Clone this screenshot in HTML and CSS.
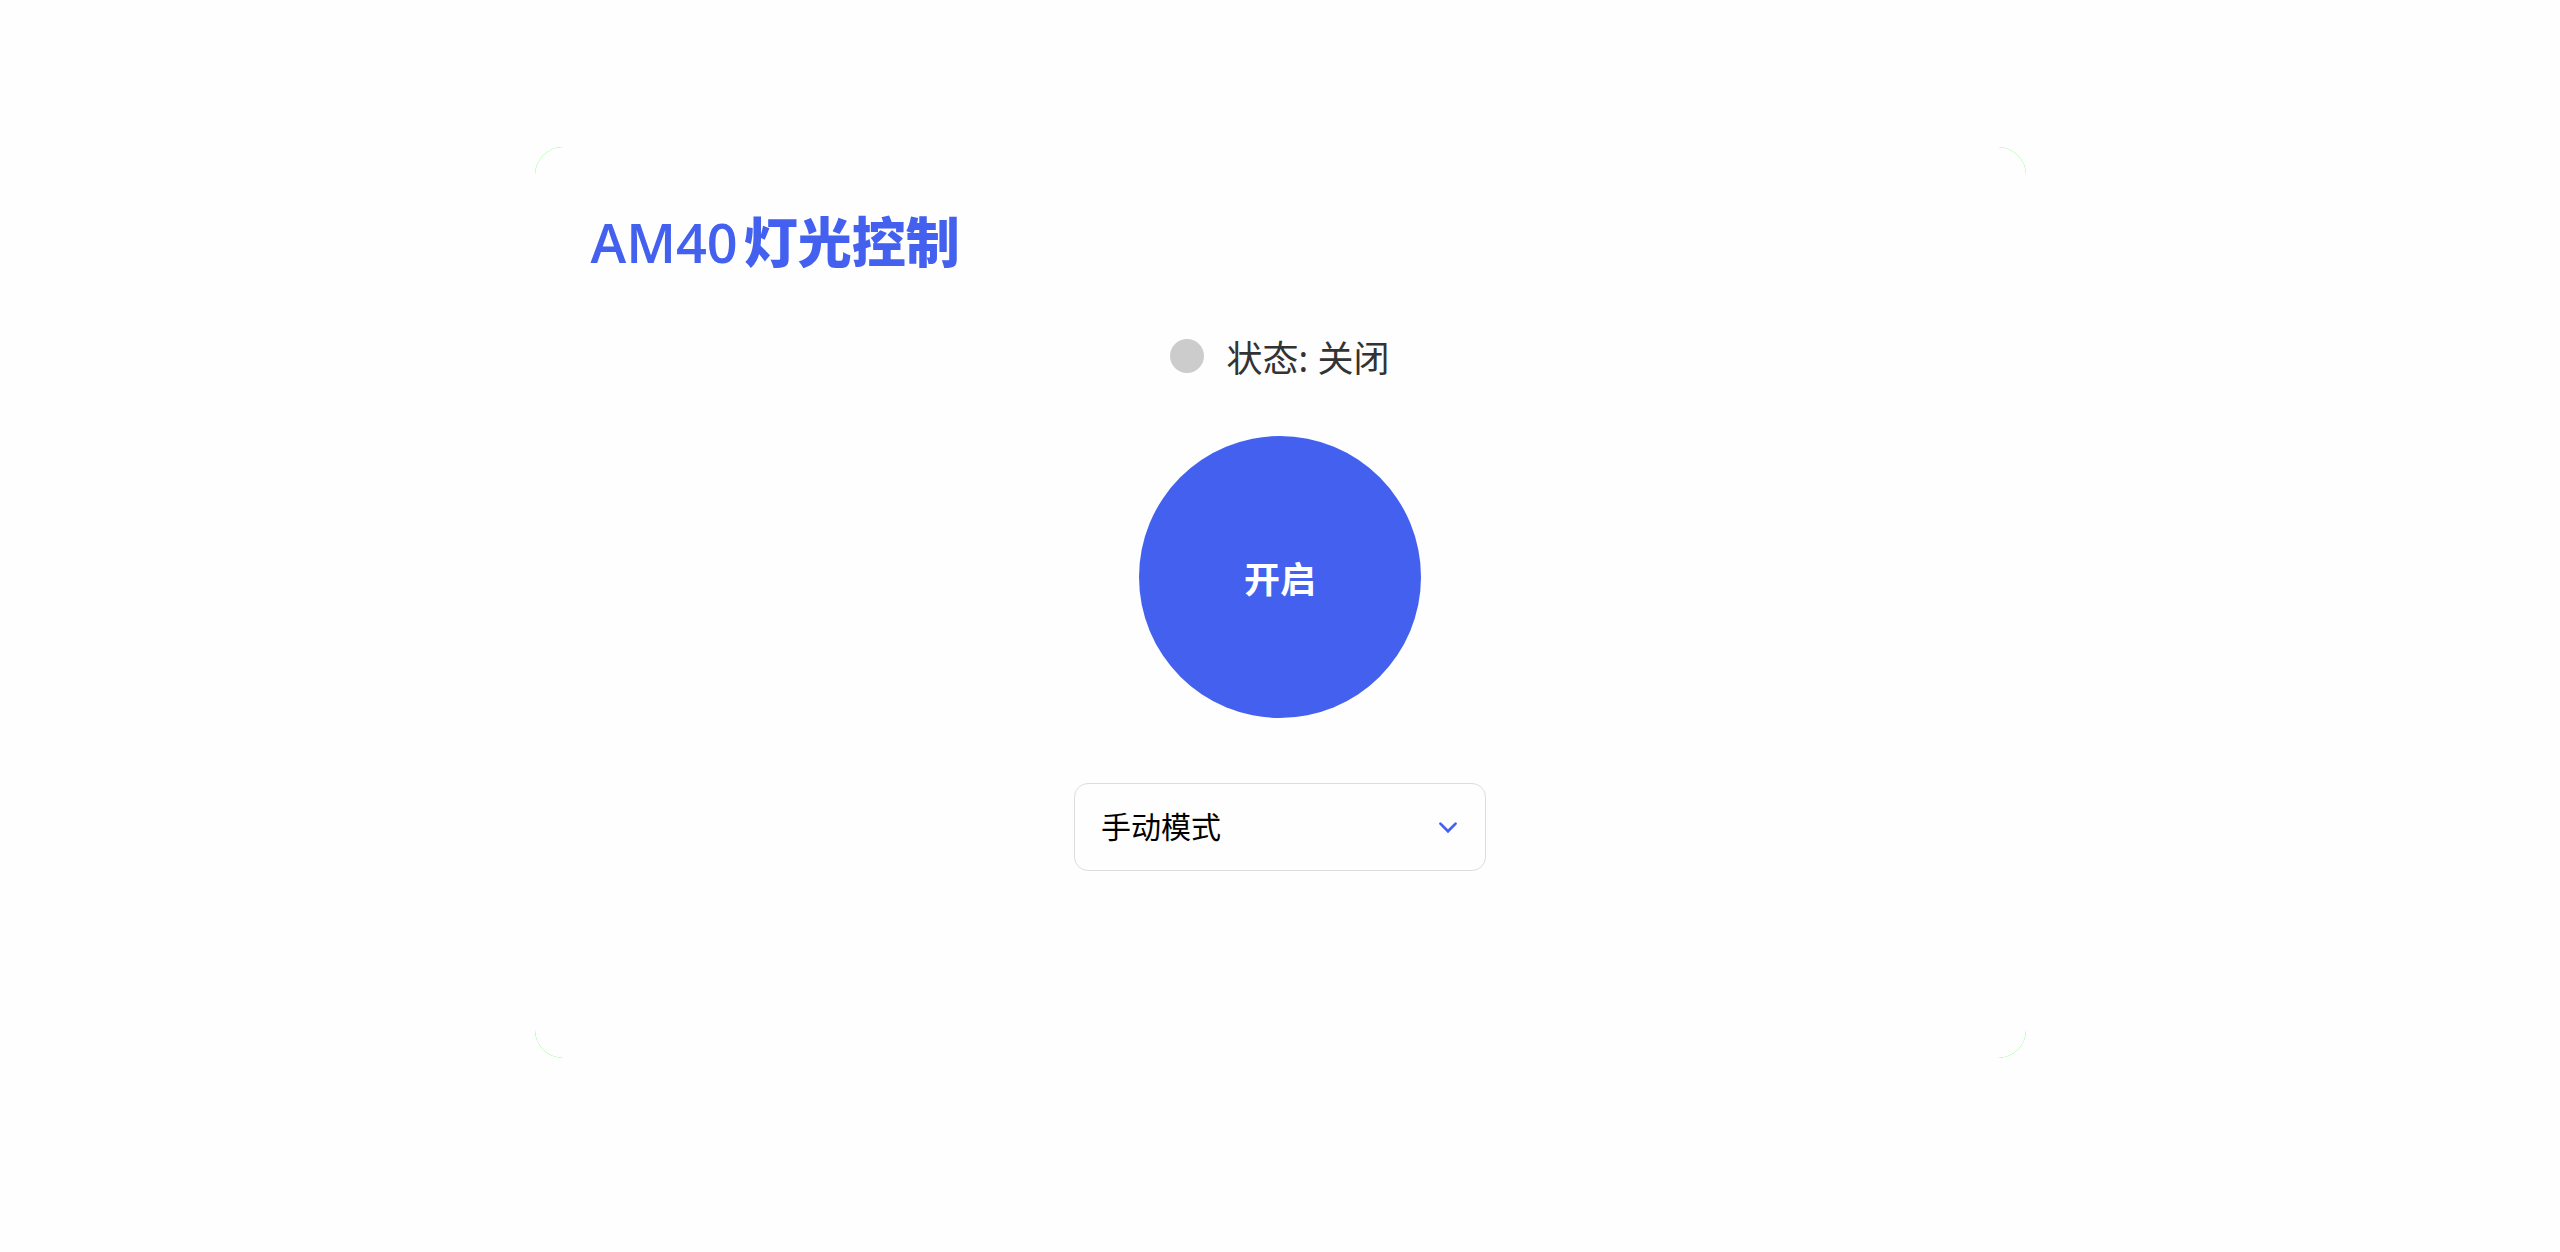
FILE: index.html
```
<!DOCTYPE html>
<html lang="zh-CN">
<head>
<meta charset="utf-8">
<meta name="viewport" content="width=device-width, initial-scale=1">
<title>AM40灯光控制</title>
<link rel="stylesheet" href="styles.css">
</head>
<body>
<main class="card">
  <div class="card-body">
    <h1 class="title"><span class="model">AM40</span>灯光控制</h1>
    <div class="controls">
      <p class="status"><span class="status-dot"></span><span class="status-text">状态: 关闭</span></p>
      <button class="power" type="button">开启</button>
      <div class="mode">
        <select class="mode-select" aria-label="模式">
          <option>手动模式</option>
        </select>
        <svg class="mode-arrow" viewBox="0 0 24 24" aria-hidden="true"><path d="M5 8l7 7 7-7" fill="none" stroke="#4361ee" stroke-width="2.5" stroke-linecap="round" stroke-linejoin="miter"/></svg>
      </div>
    </div>
  </div>
</main>
</body>
</html>
```
FILE: styles.css
```
* { box-sizing: border-box; }

body {
  margin: 0;
  padding: 147px 32px;
  background: #fefefe;
  color: #333;
  font-family: "Noto Sans", "Noto Sans CJK SC", sans-serif;
}

/* The tinted backing shows only as a fine line round the corners. */
.card {
  max-width: 1491px;
  margin: 0 auto;
  border-radius: 28px;
  background: #00ff00;
}

.card-body {
  padding: 53px 56px 187px;
  border-radius: 28px;
  background: #fefefe;
}

.title {
  margin: 0;
  color: #4361ee;
  font-family: "Noto Sans CJK SC", sans-serif;
  font-size: 54px;
  font-weight: 900;
  line-height: 80px;
}

.model {
  margin-right: 6px;
  font-family: "Open Sans", sans-serif;
  font-weight: 600;
}

.controls {
  display: flex;
  flex-direction: column;
  align-items: center;
  padding-top: 44px;
}

.status {
  display: flex;
  align-items: center;
  gap: 22px;
  margin: 0 0 51px;
  font-size: 36px;
  line-height: 52px;
}

.status-text { padding-top: 7px; }

.status-dot {
  width: 34px;
  height: 34px;
  border-radius: 50%;
  background: #ccc;
}

.power {
  width: 282px;
  height: 282px;
  margin: 0 0 65px;
  padding: 0;
  border: 0;
  border-radius: 50%;
  background: #4361ee;
  color: #fff;
  font: 700 36px "Noto Sans CJK SC", sans-serif;
}

.mode {
  position: relative;
  width: 412px;
  max-width: 100%;
}

.mode-select {
  display: block;
  width: 100%;
  height: 88px;
  padding: 0 80px 4px 26px;
  border: 1px solid #ddd;
  border-radius: 14px;
  background: #fefefe;
  color: #000;
  font: 30px "Noto Sans CJK SC", sans-serif;
  appearance: none;
}

.mode-arrow {
  position: absolute;
  top: 32px;
  right: 25px;
  width: 26px;
  height: 26px;
  pointer-events: none;
}
```
